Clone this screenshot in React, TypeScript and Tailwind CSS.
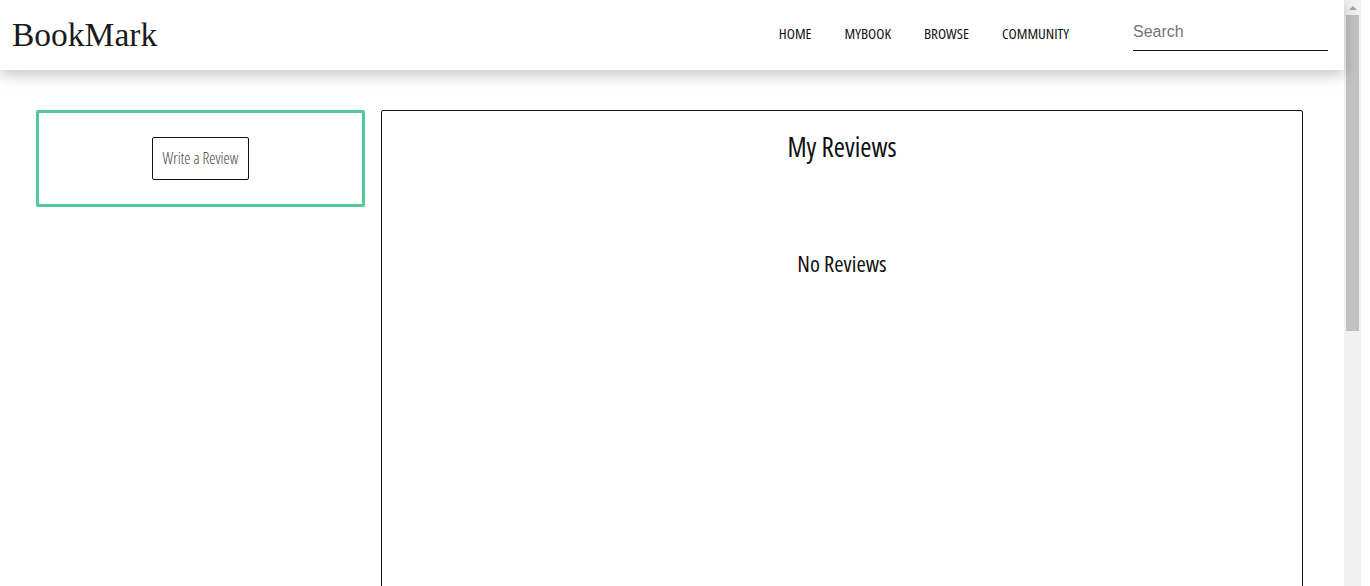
const condensed = "font-['Open_Sans','Liberation_Sans_Narrow',sans-serif] [font-stretch:75%]";

function Header() {
  return (
    <header className="relative z-10 flex h-[70px] items-center bg-white pl-3 pr-4 shadow-[0_5px_14px_rgba(0,0,0,0.22)]">
      <h1 className="font-['Liberation_Serif',serif] text-[33.5px] leading-none text-[#1a1a1a]">BookMark</h1>
      <nav className={`ml-auto mt-[-3px] flex items-center gap-[33px] text-[15px] text-[#111] ${condensed}`}>
        <a>HOME</a>
        <a>MYBOOK</a>
        <a>BROWSE</a>
        <a>COMMUNITY</a>
      </nav>
      <input
        placeholder="Search"
        className="ml-[64px] mt-[1px] w-[195px] border-b border-[#111] pb-[6px] font-['Liberation_Sans',sans-serif] text-[16px] outline-none placeholder:text-[#757575]"
      />
    </header>
  );
}

export default function App() {
  return (
    <div className="flex h-[586px] overflow-hidden bg-white">
      <div className="w-[1344px] shrink-0">
        <Header />
        <main className="flex items-start gap-4 pl-9 pr-[41px] pt-10">
          <section className="flex h-[97px] w-[329px] shrink-0 items-center justify-center rounded-[2px] border-[3px] border-[#52c996]">
            <button className={`h-[43px] rounded-[2px] border border-[#111] px-[10px] text-[15.8px] font-light text-[#444] ${condensed}`}>
              Write a Review
            </button>
          </section>
          <section className={`flex h-[500px] flex-1 flex-col items-center rounded-[2px] border border-[#111] pt-[16px] text-[#111] ${condensed}`}>
            <h2 className="text-[27px] leading-[40px]">My Reviews</h2>
            <p className="mt-[81px] text-[22.5px] leading-[32px]">No Reviews</p>
          </section>
        </main>
      </div>
      {/* scrollbar */}
      <div className="flex w-[17px] shrink-0 flex-col bg-[#f1f1f1]">
        <div className="flex h-[15px] items-center justify-center">
          <div className="h-0 w-0 border-x-[4px] border-b-[4px] border-x-transparent border-b-[#a3a3a3]" />
        </div>
        <div className="mx-[2px] h-[316px] bg-[#c1c1c1]" />
      </div>
    </div>
  );
}
